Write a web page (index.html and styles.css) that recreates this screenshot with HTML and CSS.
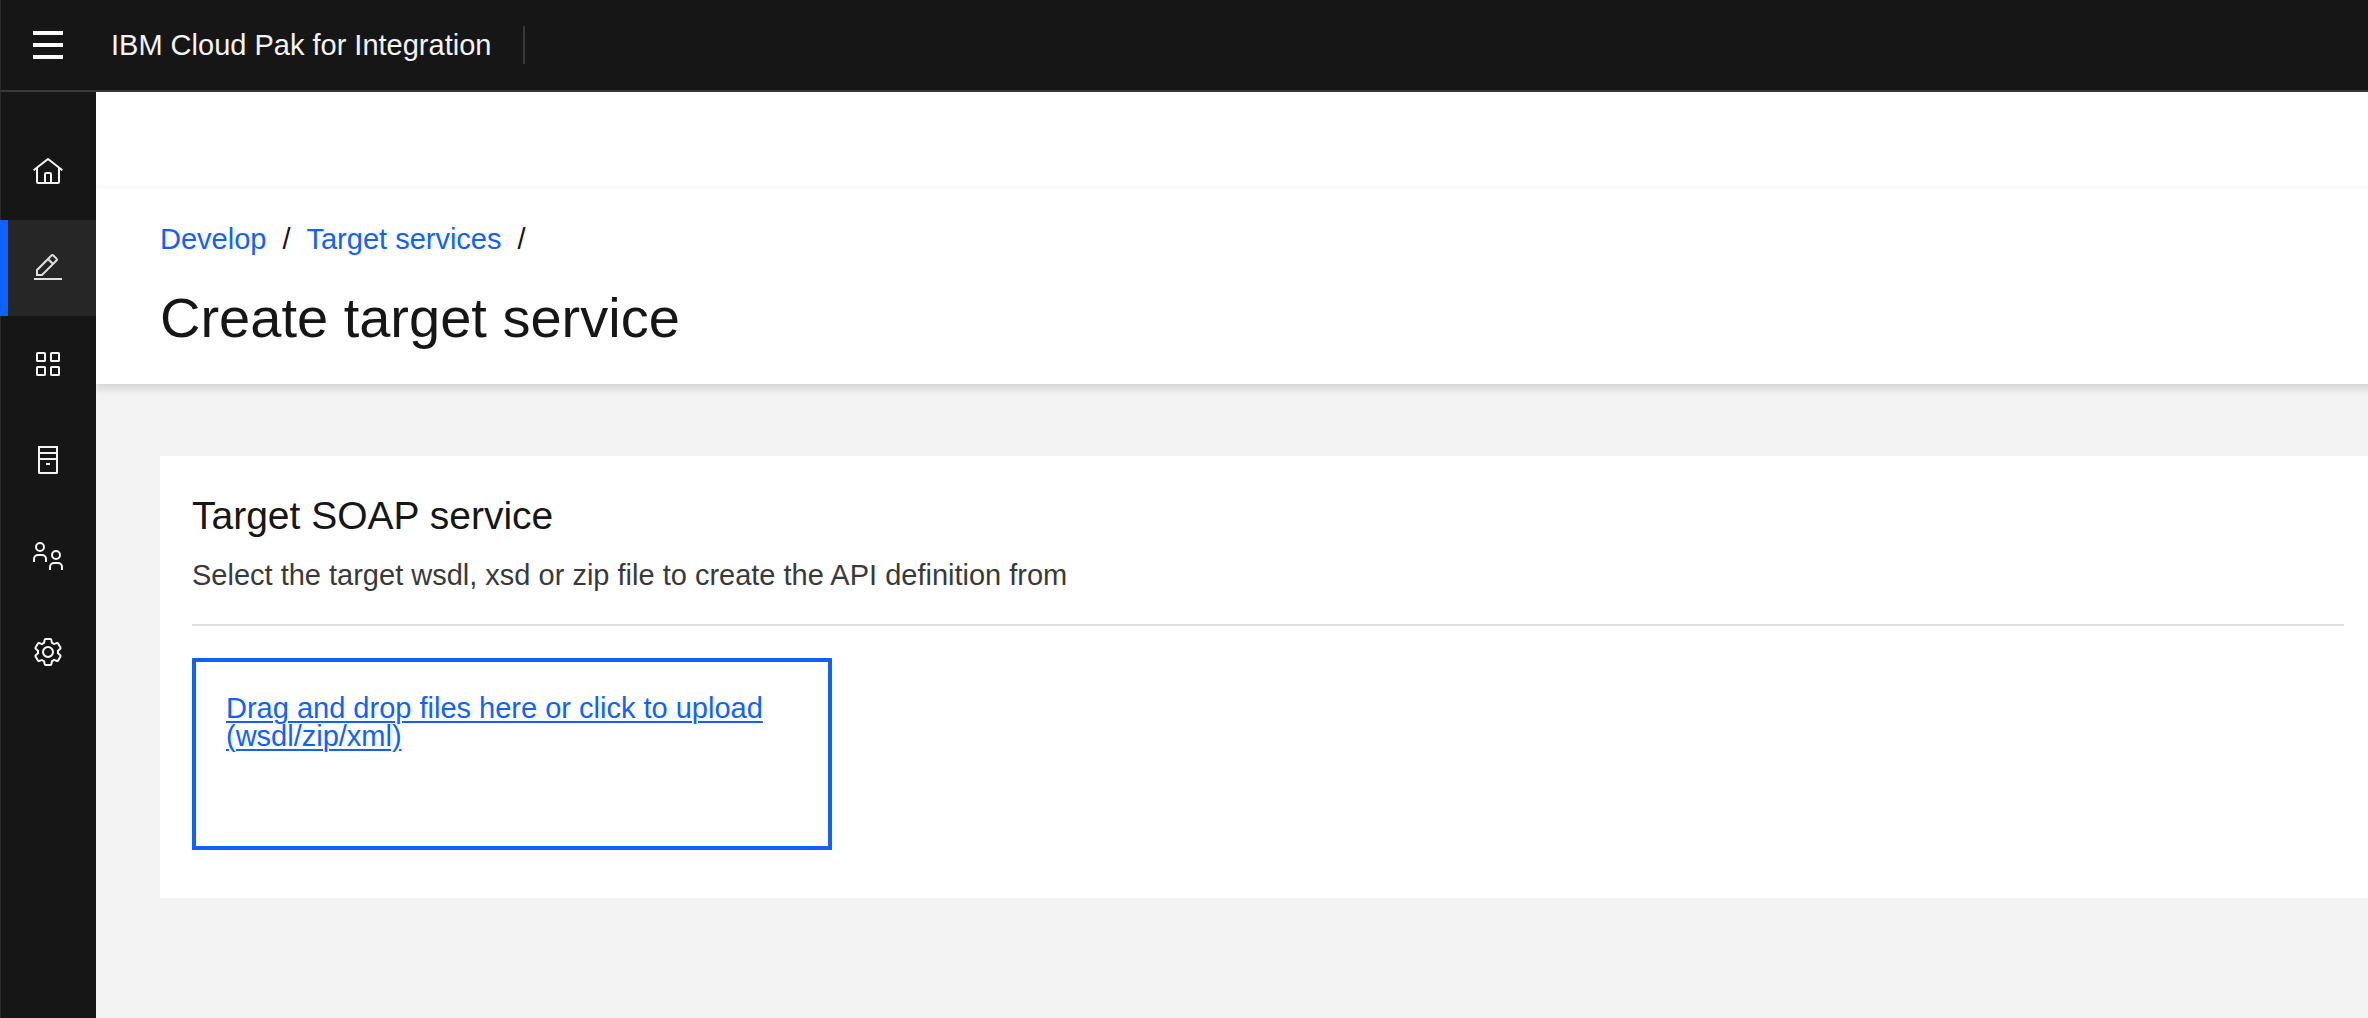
FILE: index.html
```html
<!DOCTYPE html>
<html lang="en">
<head>
<meta charset="utf-8">
<meta name="viewport" content="width=device-width, initial-scale=1">
<title>Create target service - IBM Cloud Pak for Integration</title>
<link rel="stylesheet" href="styles.css">
</head>
<body>
<div class="app">
  <header class="topbar">
    <button class="menu-button" type="button" aria-label="Open menu">
      <svg class="icon" viewBox="0 0 32 32" aria-hidden="true"><path d="M1 2h30v4H1zM1 14h30v4H1zM1 26h30v4H1z"/></svg>
    </button>
    <a class="brand" href="#">IBM Cloud Pak for Integration</a>
    <span class="topbar-divider"></span>
  </header>

  <div class="body">
    <nav class="sidebar" aria-label="Main">
      <a class="nav-item" href="#" aria-label="Home">
        <svg class="icon" viewBox="0 0 32 32" aria-hidden="true"><path d="M16.61,2.21a1,1,0,0,0-1.24,0L1,13.42,2.24,15,4,13.62V26a2,2,0,0,0,2,2H26a2,2,0,0,0,2-2V13.63L29.76,15,31,13.43ZM18,26H14V18h4Zm2,0V18a2,2,0,0,0-2-2H14a2,2,0,0,0-2,2v8H6V12.06L16,4.27l10,7.8V26Z"/></svg>
      </a>
      <a class="nav-item nav-item-active" href="#" aria-label="Develop" aria-current="page">
        <svg class="icon" viewBox="0 0 32 32" aria-hidden="true"><path d="M2 26h28v2H2zM25.4,9c0.8-0.8,0.8-2,0-2.8l-3.6-3.6c-0.8-0.8-2-0.8-2.8,0l-15,15V24h6.4L25.4,9zM20.4,4L24,7.6l-3,3L17.4,7L20.4,4zM6,22v-3.6l10-10l3.6,3.6l-10,10H6z"/></svg>
      </a>
      <a class="nav-item" href="#" aria-label="Manage">
        <svg class="icon icon-line" viewBox="0 0 32 32" aria-hidden="true"><rect x="5" y="5" width="8" height="8" rx=".6"/><rect x="19" y="5" width="8" height="8" rx=".6"/><rect x="5" y="19" width="8" height="8" rx=".6"/><rect x="19" y="19" width="8" height="8" rx=".6"/></svg>
      </a>
      <a class="nav-item" href="#" aria-label="Resources">
        <svg class="icon icon-line" viewBox="0 0 32 32" aria-hidden="true"><path d="M7 3h18v25.4a.6 .6 0 0 1-.6 .6H7.600a.6 .6 0 0 1-.6-.6zM7 9h18M7 15h18M14 20h4"/></svg>
      </a>
      <a class="nav-item" href="#" aria-label="Members">
        <svg class="icon icon-line" viewBox="0 0 32 32" aria-hidden="true"><circle cx="8" cy="7" r="4"/><path d="M2 22v-3a4 4 0 0 1 4-4h4a4 4 0 0 1 4 4v3"/><circle cx="24" cy="15" r="4"/><path d="M18 30v-3a4 4 0 0 1 4-4h4a4 4 0 0 1 4 4v3"/></svg>
      </a>
      <a class="nav-item" href="#" aria-label="Settings">
        <svg class="icon" viewBox="0 0 32 32" aria-hidden="true"><path d="M27,16.76c0-.25,0-.5,0-.76s0-.51,0-.77l1.92-1.68A2,2,0,0,0,29.3,11L26.94,7a2,2,0,0,0-1.73-1,2,2,0,0,0-.64.1l-2.43.82a11.35,11.35,0,0,0-1.31-.75l-.51-2.52a2,2,0,0,0-2-1.61H13.64a2,2,0,0,0-2,1.61l-.51,2.52a11.48,11.48,0,0,0-1.32.75L7.43,6.06A2,2,0,0,0,6.79,6,2,2,0,0,0,5.06,7L2.7,11a2,2,0,0,0,.41,2.51L5,15.24c0,.25,0,.5,0,.76s0,.51,0,.77L3.11,18.45A2,2,0,0,0,2.7,21L5.06,25a2,2,0,0,0,1.73,1,2,2,0,0,0,.64-.1l2.43-.82a11.35,11.35,0,0,0,1.31.75l.51,2.52a2,2,0,0,0,2,1.61h4.72a2,2,0,0,0,2-1.61l.51-2.52a11.48,11.48,0,0,0,1.32-.75l2.42.82a2,2,0,0,0,.64.1,2,2,0,0,0,1.73-1L29.3,21a2,2,0,0,0-.41-2.51ZM25.21,24l-3.43-1.16a8.86,8.86,0,0,1-2.71,1.57L18.36,28H13.64l-.71-3.55a9.36,9.36,0,0,1-2.7-1.57L6.79,24,4.43,20l2.72-2.4a8.9,8.9,0,0,1,0-3.13L4.43,12,6.79,8l3.43,1.16a8.86,8.86,0,0,1,2.71-1.57L13.64,4h4.72l.71,3.55a9.36,9.36,0,0,1,2.7,1.57L25.21,8,27.57,12l-2.72,2.4a8.9,8.9,0,0,1,0,3.13L27.57,20Z"/><path d="M16,22a6,6,0,1,1,6-6A5.94,5.94,0,0,1,16,22Zm0-10a3.91,3.91,0,0,0-4,4,3.91,3.91,0,0,0,4,4,3.91,3.91,0,0,0,4-4A3.91,3.91,0,0,0,16,12Z"/></svg>
      </a>
    </nav>

    <div class="page">
      <div class="banner"></div>
      <div class="page-header">
        <nav aria-label="Breadcrumb">
          <ol class="breadcrumb">
            <li><a href="#">Develop</a></li>
            <li><a href="#">Target services</a></li>
          </ol>
        </nav>
        <h1 class="page-title">Create target service</h1>
      </div>
      <main class="content">
        <section class="card">
          <div class="card-header">
            <h2 class="card-title">Target SOAP service</h2>
            <p class="card-text">Select the target wsdl, xsd or zip file to create the API definition from</p>
          </div>
          <label class="dropzone" for="file">
            <span>Drag and drop files here or click to upload (wsdl/zip/xml)</span>
            <input class="file-input" id="file" type="file" accept=".wsdl,.zip,.xml">
          </label>
        </section>
      </main>
    </div>
  </div>
</div>
</body>
</html>
```

FILE: styles.css
```css
* {
  box-sizing: border-box;
}

body {
  margin: 0;
  background: #f3f3f3;
  color: #161616;
  font-family: "Liberation Sans", Arial, sans-serif;
  font-size: 29px;
  line-height: 38px;
}

h1, h2, p, ol {
  margin: 0;
  padding: 0;
  font-weight: 400;
}

a {
  color: #0f62fe;
  text-decoration: none;
}

.app {
  display: flex;
  flex-direction: column;
  min-height: 100vh;
}

.icon {
  display: block;
  width: 32px;
  height: 32px;
  fill: currentColor;
}

.icon-line {
  fill: none;
  stroke: currentColor;
  stroke-width: 2;
}

/* Top bar */
.topbar {
  display: flex;
  align-items: center;
  height: 92px;
  border-bottom: 2px solid #393939;
  border-left: 1px solid #2c2c2c;
  background: #161616;
}

.menu-button {
  display: flex;
  justify-content: center;
  width: 94px;
  padding: 28px 0;
  border: 0;
  background: none;
  color: #fff;
}

.brand {
  padding: 0 32px 0 16px;
  color: #f4f4f4;
}

.topbar-divider {
  width: 2px;
  height: 38px;
  background: #393939;
}

.body {
  display: flex;
  flex: 1;
}

/* Side navigation */
.sidebar {
  flex: none;
  width: 96px;
  padding-top: 32px;
  border-left: 1px solid #2c2c2c;
  background: #161616;
}

.nav-item {
  display: flex;
  align-items: center;
  justify-content: center;
  height: 96px;
  padding-right: 1px;
  color: #f4f4f4;
}

.nav-item-active {
  margin-left: -1px;
  padding-right: 8px;
  border-left: 8px solid #0f62fe;
  background: #262626;
  color: #e0e0e0;
}

/* Page */
.page {
  flex: 1;
  min-width: 0;
  overflow: hidden;
}

.banner {
  height: 96px;
  background: #fff;
}

.page-header {
  margin-right: -24px;
  padding: 32px 64px 34px;
  background: #fff;
  box-shadow: 0 4px 10px rgba(0, 0, 0, 0.15);
}

.breadcrumb {
  display: flex;
  list-style: none;
}

.breadcrumb li::after {
  content: "/";
  margin: 0 16px;
}

.page-title {
  margin-top: 28px;
  font-size: 56px;
  line-height: 64px;
}

.content {
  padding: 72px 0 64px 64px;
}

.card {
  padding: 36px 24px 48px 32px;
  background: #fff;
}

.card-header {
  padding-bottom: 30px;
  border-bottom: 2px solid #e0e0e0;
}

.card-title {
  font-size: 39px;
  line-height: 48px;
}

.card-text {
  margin-top: 16px;
  color: #393939;
}

.dropzone {
  display: block;
  max-width: 640px;
  min-height: 192px;
  margin-top: 32px;
  padding: 32px 30px;
  border: 4px solid #0f62fe;
  color: #0f62fe;
  line-height: 28px;
  text-decoration: underline;
  text-decoration-thickness: 2px;
  text-underline-offset: 3px;
  cursor: pointer;
}

.file-input {
  position: absolute;
  width: 1px;
  height: 1px;
  opacity: 0;
}
```
